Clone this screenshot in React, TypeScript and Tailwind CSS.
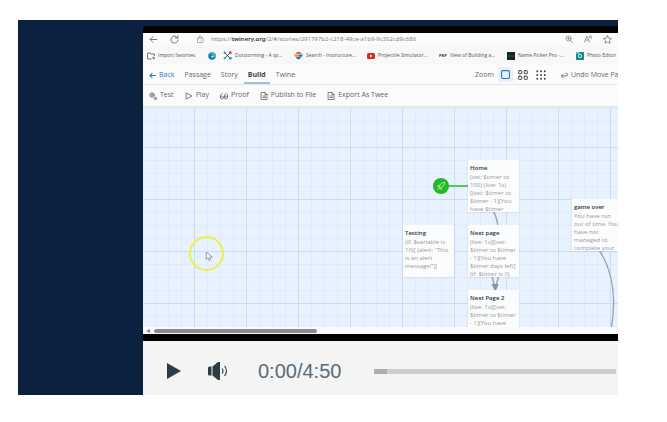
import type { ReactNode } from "react";

const ui = "font-['Open_Sans','Noto_Sans',sans-serif]";

function Icon({ children, className = "size-2", box = 16 }: { children: ReactNode; className?: string; box?: number }) {
  return (
    <svg
      viewBox={`0 0 ${box} ${box}`}
      className={`shrink-0 ${className}`}
      fill="none"
      stroke="currentColor"
      strokeWidth="1.6"
      strokeLinecap="round"
      strokeLinejoin="round"
      aria-hidden="true"
    >
      {children}
    </svg>
  );
}

function AddressBar() {
  return (
    <div className="flex h-3 items-center bg-[#fbfbfc] pl-1.5 pr-1.5 text-[#6b6b6b]">
      <button aria-label="Back" className="w-[21px]">
        <Icon className="size-[9px]"><path d="M14 8H2M7 3L2 8l5 5" /></Icon>
      </button>
      <button aria-label="Reload" className="w-[26px]">
        <Icon className="size-[9px]"><path d="M13.5 5A6.3 6.3 0 1 0 14.3 9M14 1v4.500h-4.500" /></Icon>
      </button>
      <Icon className="size-2 text-[#999]"><rect x="3" y="6" width="11" height="9" rx="1" /><path d="M6 6V4a2.500 2.500 0 0 1 5 0v2M8.500 10v1" /></Icon>
      <div className="ml-[7px] flex-1 truncate font-['Noto_Sans',sans-serif] text-[6px] leading-3 text-[#858585]">
        https://<span className="font-semibold text-[#333]">twinery.org</span>/2/#/stories/291797b2-c218-49ce-a1b9-9c302cd9c686
      </div>
      <div className="flex items-center gap-[11px] text-[#858585]">
        <button aria-label="Magnify"><Icon><circle cx="7" cy="7" r="5" /><path d="M11 11l4 4M5 7h4M7 5v4" /></Icon></button>
        <button aria-label="Read aloud"><Icon><path d="M1 14L6 2l5 12M3 10h6M11 2q2 2 1 4M13.500 1q2 3 1 6" /></Icon></button>
        <button aria-label="Add to favorites"><Icon className="size-[9px]"><path d="M8 1l2.200 4.500 5 .7-3.600 3.500.9 5L8 12.300 3.500 14.700l.9-5L.8 6.200l5-.7z" /></Icon></button>
      </div>
    </div>
  );
}

function Bookmark({ icon, label, className = "" }: { icon: ReactNode; label?: string; className?: string }) {
  return (
    <a href="#" aria-label={label ?? "Edge"} className={`flex shrink-0 items-center gap-[3px] whitespace-nowrap ${className}`}>
      {icon}
      {label}
    </a>
  );
}

function Bookmarks() {
  return (
    <div className="flex h-5 items-center overflow-hidden bg-[#f8f8f9] pl-1 pt-px text-[5px] font-medium text-[#555]">
      <Bookmark className="w-[61px]" label="Import favorites" icon={<Icon className="size-2"><path d="M15 7V4H8L6 2H1v12h7M11 12h4M13 10l2 2-2 2" /></Icon>} />
      <Bookmark className="w-[15px]" icon={
        <Icon className="size-2"><circle cx="8" cy="8" r="7.500" fill="#167ac3" stroke="none" /><path d="M1 6Q5-1 12 2q5 3 3 8l-5-1q2-5-3-5-4 0-6 2" fill="#38bf9a" stroke="none" /><circle cx="9" cy="9" r="2" fill="#fff" stroke="none" /></Icon>
      } />
      <Bookmark className="w-[71px]" label="Dotstorming - A sp..." icon={
        <Icon className="size-[9px]"><path d="M3 3l10 10M13 3L3 13" stroke="#303846" /><g stroke="none"><circle cx="3" cy="3" r="2" fill="#0b9cc9" /><circle cx="13" cy="3" r="2.500" fill="#d6347d" /><circle cx="3" cy="13" r="2" fill="#46a64a" /><circle cx="13" cy="13" r="2.500" fill="#159bd3" /></g></Icon>
      } />
      <Bookmark className="w-[73px]" label="Search - Instructure..." icon={
        <Icon className="size-[9px]"><g stroke="none"><path d="M2 5Q8-2 14 5z" fill="#e54b32" /><path d="M0 6h8v4H2z" fill="#e98c26" /><path d="M8 6h8l-2 4H8z" fill="#2378b8" /><path d="M3 11h10q-5 7-10 0" fill="#244f91" /></g></Icon>
      } />
      <Bookmark className="w-[72px]" label="Projectile Simulator..." icon={
        <Icon className="size-2"><rect y="2" width="16" height="12" rx="3" fill="#df2419" stroke="none" /><path d="M6 5l5 3-5 3z" fill="#fff" stroke="none" /></Icon>
      } />
      <Bookmark className="w-[68px]" label="View of Building a..." icon={<span className="w-2 text-[4px] font-bold text-[#333]">PKP</span>} />
      <Bookmark className="w-[69px]" label="Name Picker Pro -..." icon={
        <Icon className="size-2"><rect width="16" height="16" fill="#132520" stroke="none" /><path d="M3 8h10" stroke="#2f6a50" /></Icon>
      } />
      <Bookmark label="Photo Editor" icon={
        <Icon className="size-2"><rect width="16" height="16" fill="#128d91" stroke="none" /><circle cx="8" cy="8" r="4" fill="#c9f1e9" stroke="none" /><circle cx="8" cy="8" r="2" fill="#146d78" stroke="none" /><path d="M1 2h6" stroke="#fff" /></Icon>
      } />
    </div>
  );
}

function StoryTabs() {
  return (
    <nav className="flex h-5 items-center border-b border-[#e5e5e6] bg-[#fcfcfc] pl-1.5 text-[7px] text-[#666]">
      <div className="flex h-full flex-1 items-stretch gap-[10px]">
        <button className="flex items-center gap-[3px] pt-0.5 text-[#2778bd]">
          <Icon className="size-[7px]"><path d="M15 8H2M7 3L2 8l5 5" strokeWidth="2.400" /></Icon>
          Back
        </button>
        <button className="pt-0.5">Passage</button>
        <button className="pt-0.5">Story</button>
        <button className="-mx-1 border-b-2 border-[#9dc2e8] px-1 pt-1 font-bold text-[#444]">Build</button>
        <button className="pt-0.5">Twine</button>
      </div>
      <div className="flex h-full w-36 shrink-0 items-center overflow-hidden whitespace-nowrap pl-px">
        <span className="w-7 pt-px">Zoom</span>
        <button aria-label="Large cards" className="ml-1 mr-[5px] bg-[#e6f0fc] p-[3px] text-[#3478bd]">
          <Icon className="size-[9px]"><rect x="1" y="1" width="14" height="14" rx="2" strokeWidth="2" /></Icon>
        </button>
        <button aria-label="Medium cards" className="mr-2 text-[#444]">
          <Icon className="size-2.5"><rect x="1" y="1" width="5" height="5" rx="1" /><rect x="10" y="1" width="5" height="5" rx="1" /><rect x="1" y="10" width="5" height="5" rx="1" /><rect x="10" y="10" width="5" height="5" rx="1" /></Icon>
        </button>
        <button aria-label="Small cards" className="mr-[15px] text-[#444]">
          <Icon className="size-2.5"><path d="M2 2h.1M8 2h.1M14 2h.1M2 8h.1M8 8h.1M14 8h.1M2 14h.1M8 14h.1M14 14h.1" strokeWidth="3" /></Icon>
        </button>
        <button className="flex items-center gap-[3px] pt-px">
          <Icon className="size-[7px]"><path d="M5 5L1 9l4 4M1 9h11q3 0 3-3t-3-3h-1" strokeWidth="2" /></Icon>
          Undo Move Passage
        </button>
      </div>
    </nav>
  );
}

const page = <><path d="M3 1h7l4 4v10H3zM10 1v4h4" /><path d="M6 8h5M6 11h5" /></>;

const actions: { label: string; icon: ReactNode }[] = [
  { label: "Test", icon: <><circle cx="6" cy="6" r="4.500" /><path d="M9.500 9.500l5 5M4 6h4M6 4v4M10 14h4M14 10v4" /></> },
  { label: "Play", icon: <path d="M3 2l11 6-11 6z" /> },
  { label: "Proof", icon: <><circle cx="4" cy="11" r="3" /><circle cx="12" cy="11" r="3" /><path d="M1 11V6l4-4M9 11V6l4-4M7 11h2M15 11V5" /></> },
  { label: "Publish to File", icon: page },
  { label: "Export As Twee", icon: page },
];

function Actions() {
  return (
    <div className="flex h-[21px] items-center gap-[11px] bg-[#fbfbfb] pl-1.5 text-[7px] text-[#666]">
      {actions.map((a) => (
        <button key={a.label} className="flex shrink-0 items-center gap-[3px]">
          <Icon>{a.icon}</Icon>
          {a.label}
        </button>
      ))}
    </div>
  );
}

function Passage({ title, lines, place }: { title: string; lines: string[]; place: string }) {
  return (
    <article className={`absolute h-[52px] w-[51px] overflow-hidden whitespace-nowrap bg-[#fbfcfd] pl-0.5 pt-[3px] text-[6px] shadow-xs ${place}`}>
      <h3 className="leading-[10px] font-semibold text-[#333]">{title}</h3>
      {lines.map((l) => (
        <p key={l} className="leading-2 text-[#999]">{l}</p>
      ))}
    </article>
  );
}

function StoryMap() {
  return (
    <main className="relative h-[221px] overflow-hidden border-t-2 border-[#e3e8ef] bg-[#e8f1fe]">
      <svg className="absolute inset-0 size-full" aria-hidden="true">
        <defs>
          <pattern id="minor" width="13" height="13" x="-1" y="0" patternUnits="userSpaceOnUse">
            <path d="M.5 0v13M0 .5h13" stroke="#e0eaf9" />
          </pattern>
          <pattern id="major" width="52" height="52" x="-1" y="-13" patternUnits="userSpaceOnUse">
            <path d="M.5 0v52M0 .5h52" stroke="#cadcf4" strokeWidth="1" />
          </pattern>
        </defs>
        <rect width="100%" height="100%" fill="url(#minor)" />
        <rect width="100%" height="100%" fill="url(#major)" />
        <path d="M305 78h20" stroke="#28b828" strokeWidth="1.500" />
        <g fill="none" stroke="#a0a4aa" strokeWidth="1.400">
          <path d="M350 103q4 6 5 16M349 168l3 12M356 168l-4 12" />
          <path d="M456 142C472 166 473 194 468 222" />
        </g>
        <path d="M348.500 176h7l-3 8z" fill="#8c929a" />
      </svg>
      <div className="absolute left-[290px] top-[70px] flex size-4 items-center justify-center rounded-full bg-[#22b922] text-[#c8f3c8]">
        <Icon className="size-2.5"><path d="M5 10Q6 3 14 2q-1 8-8 9zM5 7L2 8l2 2M9 11l-1 3-2-2M2 14l2-2" strokeWidth="1.300" /></Icon>
      </div>
      <Passage title="Home" place="left-[325px] top-[52px]" lines={["(set: $timer to", "100) (live: 1s)", "[(set: $timer to", "$timer - 1)[You", "have $timer"]} />
      <Passage title="Testing" place="left-[260px] top-[117px]" lines={["(if: $variable is", "10)[ (alert: “This", "is an alert", "message!”)]"]} />
      <Passage title="Next page" place="left-[325px] top-[117px]" lines={["(live: 1s)[(set:", "$timer to $timer", "- 1)[You have", "$timer days left]", "(if: $timer is 0)"]} />
      <Passage title="Next Page 2" place="left-[325px] top-[182px]" lines={["(live: 1s)[(set:", "$timer to $timer", "- 1)[You have"]} />
      <Passage title="game over" place="left-[429px] top-[91px]" lines={["You have run", "out of time. You", "have not", "managed to", "complete your"]} />
      <div className="absolute left-[46px] top-[128px] size-[35px] rounded-full border-2 border-[#eaf23f]" />
      <Icon className="absolute left-[61px] top-[144px] size-[9px] text-[#8b8d98]"><path d="M4 1v12l3-3 2 5 3-1-2-5h4z" fill="#fff" /></Icon>
    </main>
  );
}

function Controls() {
  return (
    <div className="flex h-[54px] items-center bg-[#f4f4f4] pl-6 pr-0.5 pt-1.5 text-[#2d3b45]">
      <button aria-label="Play" className="w-10">
        <svg viewBox="0 0 14 16" className="h-4 w-3.5" fill="currentColor"><path d="M0 0l14 8-14 8z" /></svg>
      </button>
      <button aria-label="Mute" className="w-[51px]">
        <svg viewBox="0 0 22 18" className="h-[18px] w-[22px]" fill="currentColor">
          <path d="M2.500 4.500h2v9h-2q-1.500 0-1.500-1.500V6q0-1.500 1.500-1.500zM5.500 4.500L11 0h2v18h-2L5.500 13.500z" />
          <path d="M15 6.500q2 2.500 0 5M17.500 4q4 5 0 10" fill="none" stroke="currentColor" strokeWidth="1.100" />
        </svg>
      </button>
      <time className="mr-[33px] text-xl text-[#586b7a]">0:00/4:50</time>
      <input
        type="range"
        aria-label="Seek"
        min={0}
        max={290}
        defaultValue={0}
        className="h-[5px] min-w-0 flex-1 appearance-none overflow-hidden rounded-[1px] bg-[#c9cfd2] [&::-webkit-slider-thumb]:h-[5px] [&::-webkit-slider-thumb]:w-[13px] [&::-webkit-slider-thumb]:appearance-none [&::-webkit-slider-thumb]:bg-[#a8b0b4]"
      />
    </div>
  );
}

export default function App() {
  return (
    <div className="min-h-screen bg-white pl-[18px] pr-[49px] pt-5 font-['Liberation_Sans',Arial,sans-serif]">
      <div className="bg-[#0b213f] pl-[125px] pt-1.5">
        <div className="overflow-hidden rounded-tl">
          <div className={`bg-black py-[7px] ${ui}`}>
            <AddressBar />
            <Bookmarks />
            <StoryTabs />
            <Actions />
            <StoryMap />
            <div className="flex h-[7px] items-center bg-[#fafafa] pl-[3px]">
              <svg viewBox="0 0 4 4" className="size-1" fill="#888"><path d="M4 0v4L0 2z" /></svg>
              <div className="ml-1 h-1 w-[163px] rounded-full bg-[#8b8b8b]" />
            </div>
          </div>
          <Controls />
        </div>
      </div>
    </div>
  );
}
